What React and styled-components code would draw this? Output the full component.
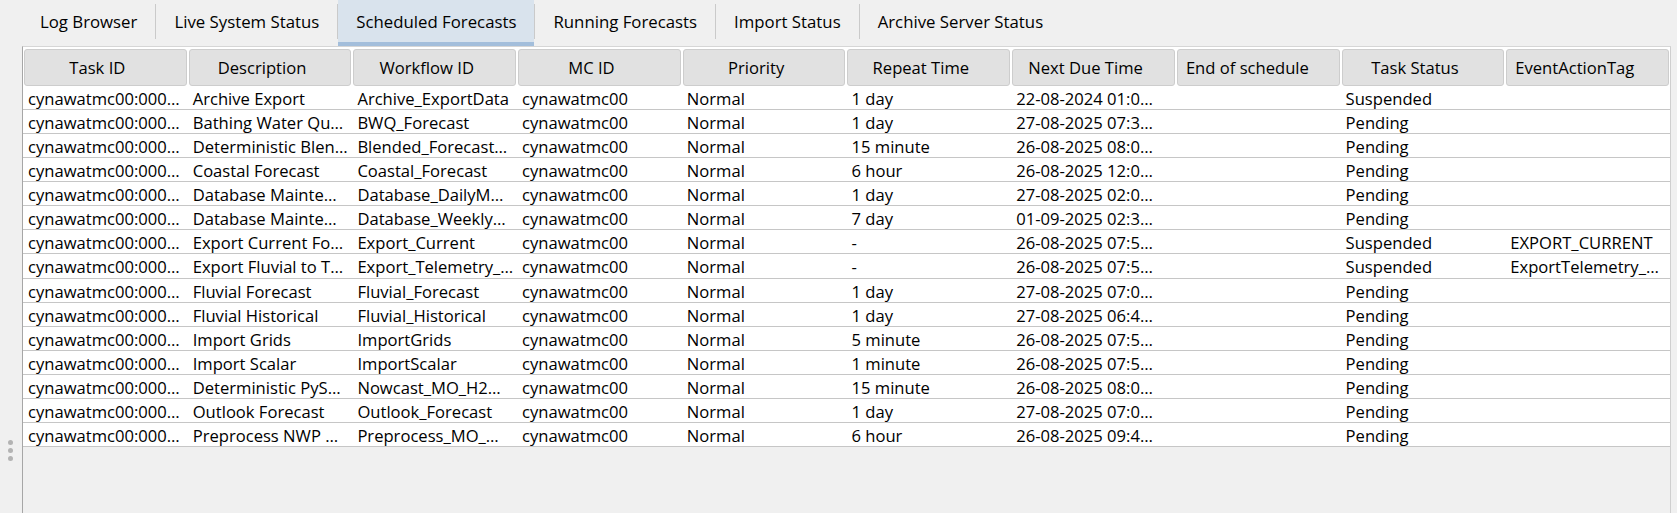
import React from 'react';
import styled, { createGlobalStyle } from 'styled-components';

const GlobalStyle = createGlobalStyle`
  html, body, #root {
    margin: 0;
    height: 100%;
  }
  body {
    background: #f0f0f0;
    font-family: "Open Sans", "Noto Sans", sans-serif;
    color: #000;
    overflow: hidden;
  }
`;

const tabs = [
    'Log Browser',
    'Live System Status',
    'Scheduled Forecasts',
    'Running Forecasts',
    'Import Status',
    'Archive Server Status',
];

const columns = [
    { title: 'Task ID' },
    { title: 'Description' },
    { title: 'Workflow ID' },
    { title: 'MC ID' },
    { title: 'Priority' },
    { title: 'Repeat Time' },
    { title: 'Next Due Time' },
    { title: 'End of schedule', left: true },
    { title: 'Task Status' },
    { title: 'EventActionTag', left: true },
];

const T = 'cynawatmc00:000…';
const MC = 'cynawatmc00';

const rows = [
    [T, 'Archive Export', 'Archive_ExportData', MC, 'Normal', '1 day', '22-08-2024 01:0…', '', 'Suspended', ''],
    [T, 'Bathing Water Qu…', 'BWQ_Forecast', MC, 'Normal', '1 day', '27-08-2025 07:3…', '', 'Pending', ''],
    [T, 'Deterministic Blen…', 'Blended_Forecast…', MC, 'Normal', '15 minute', '26-08-2025 08:0…', '', 'Pending', ''],
    [T, 'Coastal Forecast', 'Coastal_Forecast', MC, 'Normal', '6 hour', '26-08-2025 12:0…', '', 'Pending', ''],
    [T, 'Database Mainte…', 'Database_DailyM…', MC, 'Normal', '1 day', '27-08-2025 02:0…', '', 'Pending', ''],
    [T, 'Database Mainte…', 'Database_Weekly…', MC, 'Normal', '7 day', '01-09-2025 02:3…', '', 'Pending', ''],
    [T, 'Export Current Fo…', 'Export_Current', MC, 'Normal', '-', '26-08-2025 07:5…', '', 'Suspended', 'EXPORT_CURRENT'],
    [T, 'Export Fluvial to T…', 'Export_Telemetry_…', MC, 'Normal', '-', '26-08-2025 07:5…', '', 'Suspended', 'ExportTelemetry_…'],
    [T, 'Fluvial Forecast', 'Fluvial_Forecast', MC, 'Normal', '1 day', '27-08-2025 07:0…', '', 'Pending', ''],
    [T, 'Fluvial Historical', 'Fluvial_Historical', MC, 'Normal', '1 day', '27-08-2025 06:4…', '', 'Pending', ''],
    [T, 'Import Grids', 'ImportGrids', MC, 'Normal', '5 minute', '26-08-2025 07:5…', '', 'Pending', ''],
    [T, 'Import Scalar', 'ImportScalar', MC, 'Normal', '1 minute', '26-08-2025 07:5…', '', 'Pending', ''],
    [T, 'Deterministic PyS…', 'Nowcast_MO_H2…', MC, 'Normal', '15 minute', '26-08-2025 08:0…', '', 'Pending', ''],
    [T, 'Outlook Forecast', 'Outlook_Forecast', MC, 'Normal', '1 day', '27-08-2025 07:0…', '', 'Pending', ''],
    [T, 'Preprocess NWP …', 'Preprocess_MO_…', MC, 'Normal', '6 hour', '26-08-2025 09:4…', '', 'Pending', ''],
];

function App() {
    return (
        <Page>
            <GlobalStyle />
            <TabBar>
                {tabs.map((tab, i) => (
                    <React.Fragment key={tab}>
                        {i > 0 && <TabSeparator />}
                        <Tab $active={tab === 'Scheduled Forecasts'}>{tab}</Tab>
                    </React.Fragment>
                ))}
            </TabBar>

            <Body>
                <Gutter>
                    <Grip>
                        <GripDot />
                        <GripDot />
                        <GripDot />
                    </Grip>
                </Gutter>

                <TableFrame>
                    <HeaderRow>
                        {columns.map((col) => (
                            <HeaderCell key={col.title} $left={col.left}>
                                {col.title}
                            </HeaderCell>
                        ))}
                    </HeaderRow>

                    {rows.map((row, r) => (
                        <Row key={r}>
                            {row.map((value, c) => (
                                <Cell key={c}>{value}</Cell>
                            ))}
                        </Row>
                    ))}
                </TableFrame>
            </Body>
        </Page>
    );
}

export default App;

const Page = styled.div`
    display: flex;
    flex-direction: column;
    height: 100%;
`;

const TabBar = styled.div`
    display: flex;
    align-items: stretch;
    height: 46px;
    padding-left: 22px;
    flex-shrink: 0;
`;

const TabSeparator = styled.div`
    width: 1px;
    height: 35px;
    align-self: center;
    margin-top: -4px;
    background: #cacaca;
`;

const Tab = styled.div`
    display: flex;
    align-items: center;
    padding: 0 18px;
    font-size: 16.8px;
    white-space: nowrap;
    background: ${(p) => (p.$active ? '#d9e3ed' : 'transparent')};
    border-bottom: 4px solid ${(p) => (p.$active ? '#a3bedb' : 'transparent')};
    box-sizing: border-box;
`;

const Body = styled.div`
    display: flex;
    flex: 1;
    min-height: 0;
`;

const Gutter = styled.div`
    width: 22px;
    display: flex;
    flex-direction: column;
    justify-content: flex-end;
    align-items: center;
    padding-bottom: 52px;
    box-sizing: border-box;
`;

const Grip = styled.div`
    display: flex;
    flex-direction: column;
    gap: 3px;
    margin-left: -2px;
`;

const GripDot = styled.div`
    width: 5px;
    height: 5px;
    border-radius: 50%;
    background: #b3b3b3;
`;

const TableFrame = styled.div`
    flex: 1;
    margin-right: 6px;
    border-left: 1px solid #a6a6a6;
    border-top: 1px solid #d6d6d6;
    border-right: 1px solid #cfcfcf;
    background: #f0f0f0;
    display: flex;
    flex-direction: column;
`;

const HeaderRow = styled.div`
    display: grid;
    grid-template-columns: repeat(10, 1fr);
    padding-top: 2px;
    background: #fff;
`;

const HeaderCell = styled.div`
    margin: 0 1px;
    height: 37px;
    box-sizing: border-box;
    border: 1px solid #cdcdcd;
    border-radius: 3px;
    background: #e1e1e1;
    display: flex;
    align-items: center;
    justify-content: ${(p) => (p.$left ? 'flex-start' : 'center')};
    padding: ${(p) => (p.$left ? '0 0 0 8px' : '0 16px 0 0')};
    font-size: 16.6px;
    white-space: nowrap;
    overflow: hidden;
`;

const Row = styled.div`
    display: grid;
    grid-template-columns: repeat(10, 1fr);
    height: 24.07px;
    box-sizing: border-box;
    border-bottom: 1px solid #c6c6c6;
    background: #fff;
    overflow: hidden;
`;

const Cell = styled.div`
    padding: 2px 0 0 5px;
    font-size: 16.6px;
    line-height: 21px;
    white-space: nowrap;
    overflow: hidden;
`;
